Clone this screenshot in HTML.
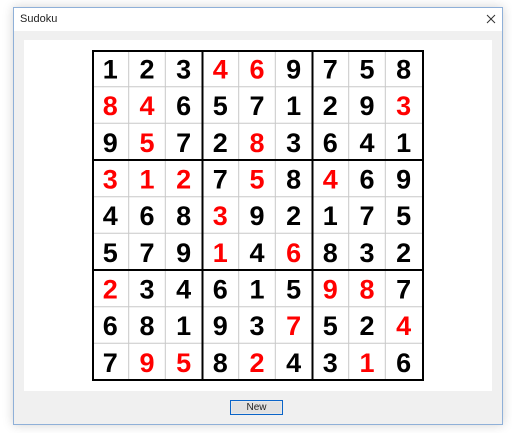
<!DOCTYPE html>
<html><head><style>
html,body{margin:0;padding:0;width:512px;height:433px;background:#fff;overflow:hidden;font-family:"Liberation Sans",Arial,sans-serif}
.win{position:absolute;left:13px;top:7px;width:488px;height:416px;border:1px solid #8fb0d8;background:#f0f0f0;box-shadow:0 0 10px rgba(0,0,0,0.18)}
.title{position:absolute;left:0;top:0;width:488px;height:23px;background:#fff}
.title span{position:absolute;left:6px;top:5px;font-size:11px;color:#222}
.panel{position:absolute;left:10px;top:32px;width:468px;height:351px;background:#fff}
.btn{position:absolute;left:216px;top:392px;width:51px;height:13px;border:1px solid #0a64c8;background:#e1e1e1;box-shadow:inset 0 0 0 1px #e8e8e8;font-size:10px;text-align:center;line-height:13px;color:#222}
svg{position:absolute;left:0;top:0}
</style></head><body>
<div class="win">
<div class="title"><span>Sudoku</span>
<svg width="488" height="23"><path d="M473 7 L481 15 M481 7 L473 15" stroke="#333" stroke-width="1"/></svg></div>
<div class="panel"></div>
<div class="btn">New</div>
</div>
<svg width="512" height="433" font-family="Liberation Sans, Arial, sans-serif" font-weight="bold" font-size="27" text-anchor="middle">
<g stroke="#c8c8c8" stroke-width="1">
<line x1="128.7" y1="50" x2="128.7" y2="381"/><line x1="165.3" y1="50" x2="165.3" y2="381"/>
<line x1="238.7" y1="50" x2="238.7" y2="381"/><line x1="275.3" y1="50" x2="275.3" y2="381"/>
<line x1="348.7" y1="50" x2="348.7" y2="381"/><line x1="385.3" y1="50" x2="385.3" y2="381"/>
<line x1="92" y1="86.7" x2="424" y2="86.7"/><line x1="92" y1="123.3" x2="424" y2="123.3"/>
<line x1="92" y1="196.7" x2="424" y2="196.7"/><line x1="92" y1="233.3" x2="424" y2="233.3"/>
<line x1="92" y1="306.7" x2="424" y2="306.7"/><line x1="92" y1="343.3" x2="424" y2="343.3"/>
</g>
<g stroke="#000" stroke-width="2" fill="none">
<rect x="93" y="51" width="330" height="329"/>
<line x1="202.5" y1="50" x2="202.5" y2="381"/><line x1="312.5" y1="50" x2="312.5" y2="381"/>
<line x1="92" y1="160" x2="424" y2="160"/><line x1="92" y1="270" x2="424" y2="270"/>
</g>
<g>
<text x="110.3" y="78.4">1</text><text x="147" y="78.4">2</text><text x="183.7" y="78.4">3</text><text x="220.3" y="78.4" fill="red">4</text><text x="257" y="78.4" fill="red">6</text><text x="293.7" y="78.4">9</text><text x="330.3" y="78.4">7</text><text x="367" y="78.4">5</text><text x="403.7" y="78.4">8</text>
<text x="110.3" y="115.1" fill="red">8</text><text x="147" y="115.1" fill="red">4</text><text x="183.7" y="115.1">6</text><text x="220.3" y="115.1">5</text><text x="257" y="115.1">7</text><text x="293.7" y="115.1">1</text><text x="330.3" y="115.1">2</text><text x="367" y="115.1">9</text><text x="403.7" y="115.1" fill="red">3</text>
<text x="110.3" y="151.8">9</text><text x="147" y="151.8" fill="red">5</text><text x="183.7" y="151.8">7</text><text x="220.3" y="151.8">2</text><text x="257" y="151.8" fill="red">8</text><text x="293.7" y="151.8">3</text><text x="330.3" y="151.8">6</text><text x="367" y="151.8">4</text><text x="403.7" y="151.8">1</text>
<text x="110.3" y="188.5" fill="red">3</text><text x="147" y="188.5" fill="red">1</text><text x="183.7" y="188.5" fill="red">2</text><text x="220.3" y="188.5">7</text><text x="257" y="188.5" fill="red">5</text><text x="293.7" y="188.5">8</text><text x="330.3" y="188.5" fill="red">4</text><text x="367" y="188.5">6</text><text x="403.7" y="188.5">9</text>
<text x="110.3" y="225.2">4</text><text x="147" y="225.2">6</text><text x="183.7" y="225.2">8</text><text x="220.3" y="225.2" fill="red">3</text><text x="257" y="225.2">9</text><text x="293.7" y="225.2">2</text><text x="330.3" y="225.2">1</text><text x="367" y="225.2">7</text><text x="403.7" y="225.2">5</text>
<text x="110.3" y="261.8">5</text><text x="147" y="261.8">7</text><text x="183.7" y="261.8">9</text><text x="220.3" y="261.8" fill="red">1</text><text x="257" y="261.8">4</text><text x="293.7" y="261.8" fill="red">6</text><text x="330.3" y="261.8">8</text><text x="367" y="261.8">3</text><text x="403.7" y="261.8">2</text>
<text x="110.3" y="298.5" fill="red">2</text><text x="147" y="298.5">3</text><text x="183.7" y="298.5">4</text><text x="220.3" y="298.5">6</text><text x="257" y="298.5">1</text><text x="293.7" y="298.5">5</text><text x="330.3" y="298.5" fill="red">9</text><text x="367" y="298.5" fill="red">8</text><text x="403.7" y="298.5">7</text>
<text x="110.3" y="335.2">6</text><text x="147" y="335.2">8</text><text x="183.7" y="335.2">1</text><text x="220.3" y="335.2">9</text><text x="257" y="335.2">3</text><text x="293.7" y="335.2" fill="red">7</text><text x="330.3" y="335.2">5</text><text x="367" y="335.2">2</text><text x="403.7" y="335.2" fill="red">4</text>
<text x="110.3" y="371.9">7</text><text x="147" y="371.9" fill="red">9</text><text x="183.7" y="371.9" fill="red">5</text><text x="220.3" y="371.9">8</text><text x="257" y="371.9" fill="red">2</text><text x="293.7" y="371.9">4</text><text x="330.3" y="371.9">3</text><text x="367" y="371.9" fill="red">1</text><text x="403.7" y="371.9">6</text>
</g>
</svg>
</body></html>
